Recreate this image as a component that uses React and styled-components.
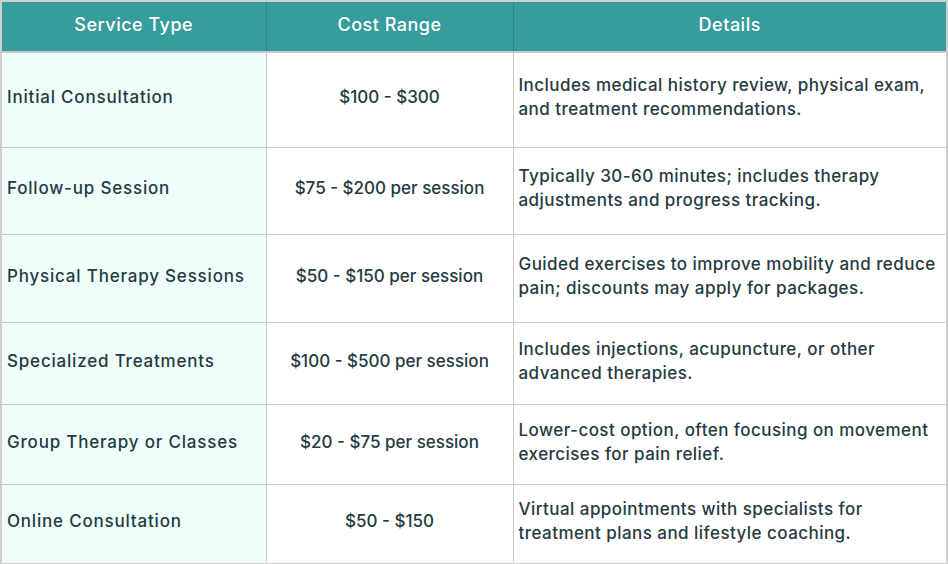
import React from 'react';
import styled, { createGlobalStyle } from 'styled-components';

const GlobalStyle = createGlobalStyle`
  html, body {
    margin: 0;
    padding: 0;
    background: #ffffff;
  }
  body {
    font-family: Inter, "Noto Sans", sans-serif;
    color: #253a42;
  }
`;

const Table = styled.table`
  width: 948px;
  border-collapse: collapse;
  table-layout: fixed;
  border: 2px solid #cfcfcf;
  font-size: 17px;
`;

const HeadCell = styled.th`
  height: 45px;
  padding: 0 5px 4px;
  background-color: #379c9c;
  color: #ffffff;
  font-weight: 500;
  font-size: 18px;
  letter-spacing: 0.5px;
  text-align: center;
  border: 1px solid #2d8585;
  border-bottom: 2px solid #c9c9c9;
`;

const Row = styled.tr`
  height: ${(p) => p.$h}px;
`;

const Cell = styled.td`
  padding: 0 5px 5px;
  border: 1px solid #c9c9c9;
  font-weight: 500;
  line-height: 24px;
  letter-spacing: ${(p) => p.$ls}px;
  vertical-align: middle;
  text-align: ${(p) => (p.$center ? 'center' : 'left')};
  background-color: ${(p) => (p.$tint ? '#effefb' : '#ffffff')};
`;

const rows = [
  {
    service: 'Initial Consultation',
    cost: '$100 - $300',
    details: ['Includes medical history review, physical exam,', 'and treatment recommendations.'],
    height: 95,
  },
  {
    service: 'Follow-up Session',
    cost: '$75 - $200 per session',
    details: ['Typically 30-60 minutes; includes therapy', 'adjustments and progress tracking.'],
    height: 87,
  },
  {
    service: 'Physical Therapy Sessions',
    cost: '$50 - $150 per session',
    details: ['Guided exercises to improve mobility and reduce', 'pain; discounts may apply for packages.'],
    height: 88,
  },
  {
    service: 'Specialized Treatments',
    cost: '$100 - $500 per session',
    details: ['Includes injections, acupuncture, or other', 'advanced therapies.'],
    height: 82,
  },
  {
    service: 'Group Therapy or Classes',
    cost: '$20 - $75 per session',
    details: ['Lower-cost option, often focusing on movement', 'exercises for pain relief.'],
    height: 80,
  },
  {
    service: 'Online Consultation',
    cost: '$50 - $150',
    details: ['Virtual appointments with specialists for', 'treatment plans and lifestyle coaching.'],
    height: 80,
  },
];

const App = () => (
  <>
    <GlobalStyle />
    <Table>
      <colgroup>
        <col style={{ width: 265 }} />
        <col style={{ width: 247 }} />
        <col />
      </colgroup>
      <thead>
        <tr>
          <HeadCell>Service Type</HeadCell>
          <HeadCell>Cost Range</HeadCell>
          <HeadCell>Details</HeadCell>
        </tr>
      </thead>
      <tbody>
        {rows.map((r) => (
          <Row key={r.service} $h={r.height}>
            <Cell $tint $ls={0.8}>{r.service}</Cell>
            <Cell $center $ls={0}>{r.cost}</Cell>
            <Cell $ls={0.45}>
              {r.details[0]}
              <br />
              {r.details[1]}
            </Cell>
          </Row>
        ))}
      </tbody>
    </Table>
  </>
);

export default App;
